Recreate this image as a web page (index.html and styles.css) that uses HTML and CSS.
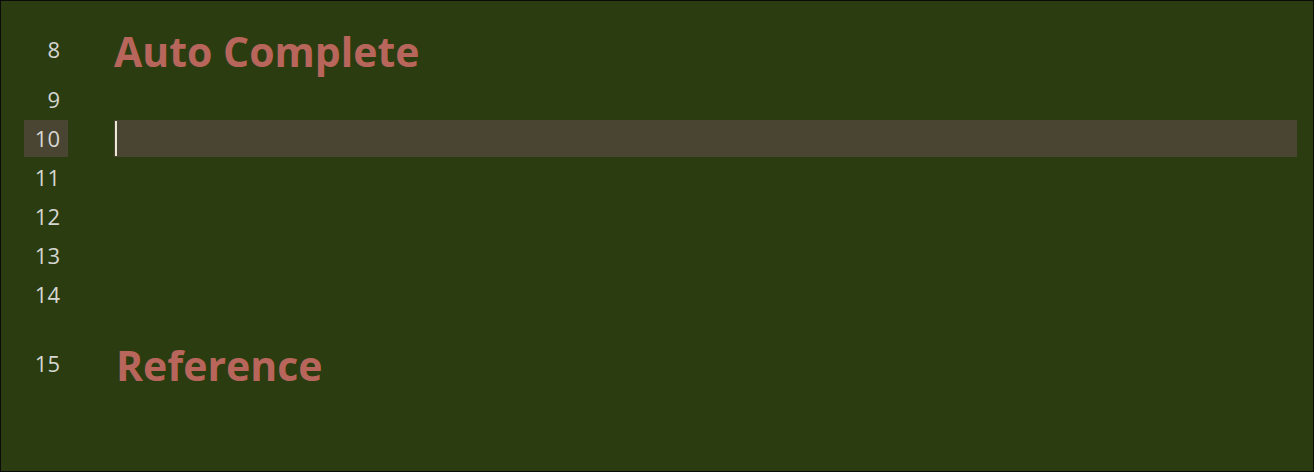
FILE: index.html
```html
<!DOCTYPE html>
<html>
<head>
<meta charset="utf-8">
<link rel="stylesheet" href="styles.css">
</head>
<body>
<div class="editor">
  <div class="line heading first">
    <div class="gutter"><span class="num">8</span></div>
    <div class="content"><h1 class="title">Auto Complete</h1></div>
  </div>
  <div class="line">
    <div class="gutter"><span class="num">9</span></div>
    <div class="content"></div>
  </div>
  <div class="line active">
    <div class="gutter"><span class="num">10</span></div>
    <div class="content"><span class="cursor"></span></div>
  </div>
  <div class="line">
    <div class="gutter"><span class="num">11</span></div>
    <div class="content"></div>
  </div>
  <div class="line">
    <div class="gutter"><span class="num">12</span></div>
    <div class="content"></div>
  </div>
  <div class="line">
    <div class="gutter"><span class="num">13</span></div>
    <div class="content"></div>
  </div>
  <div class="line">
    <div class="gutter"><span class="num">14</span></div>
    <div class="content"></div>
  </div>
  <div class="line heading">
    <div class="gutter"><span class="num">15</span></div>
    <div class="content"><h1 class="title title-ref">Reference</h1></div>
  </div>
</div>
</body>
</html>
```

FILE: styles.css
```css
html, body {
  margin: 0;
  padding: 0;
  background: #2b3d10;
}

.editor {
  width: 1314px;
  height: 472px;
  box-sizing: border-box;
  border: 1px solid #0b0b0b;
  background: #2b3d10;
  font-family: "Open Sans", "Noto Sans", sans-serif;
  overflow: hidden;
}

.line {
  display: flex;
  height: 39px;
}

.line.heading {
  height: 80px;
}

.line.heading.first {
  height: 79px;
}

.gutter {
  width: 67px;
  flex: none;
  display: flex;
  justify-content: flex-end;
  align-items: flex-start;
}

.num {
  display: block;
  width: 44px;
  height: 37px;
  margin-top: 1px;
  box-sizing: border-box;
  padding-right: 8px;
  text-align: right;
  font-size: 22px;
  line-height: 37px;
  color: #d6d6d2;
}

.heading .num {
  margin-top: 31px;
}

.heading.first .num {
  margin-top: 30px;
}

.content {
  flex: 1;
  margin-left: 46px;
  margin-right: 16px;
}

.active .num,
.active .content {
  background: #4a4532;
}

.active .content {
  height: 37px;
  margin-top: 1px;
}

.cursor {
  display: block;
  width: 2px;
  height: 35px;
  margin-left: 1px;
  margin-top: 1px;
  background: #ece6d6;
}

.title {
  margin: 0;
  padding-top: 23px;
  padding-left: 0;
  font-size: 41px;
  line-height: 56px;
  font-weight: 700;
  color: #b8665c;
}

.first .title {
  padding-top: 22px;
}

.title-ref {
  padding-left: 2px;
}
```
